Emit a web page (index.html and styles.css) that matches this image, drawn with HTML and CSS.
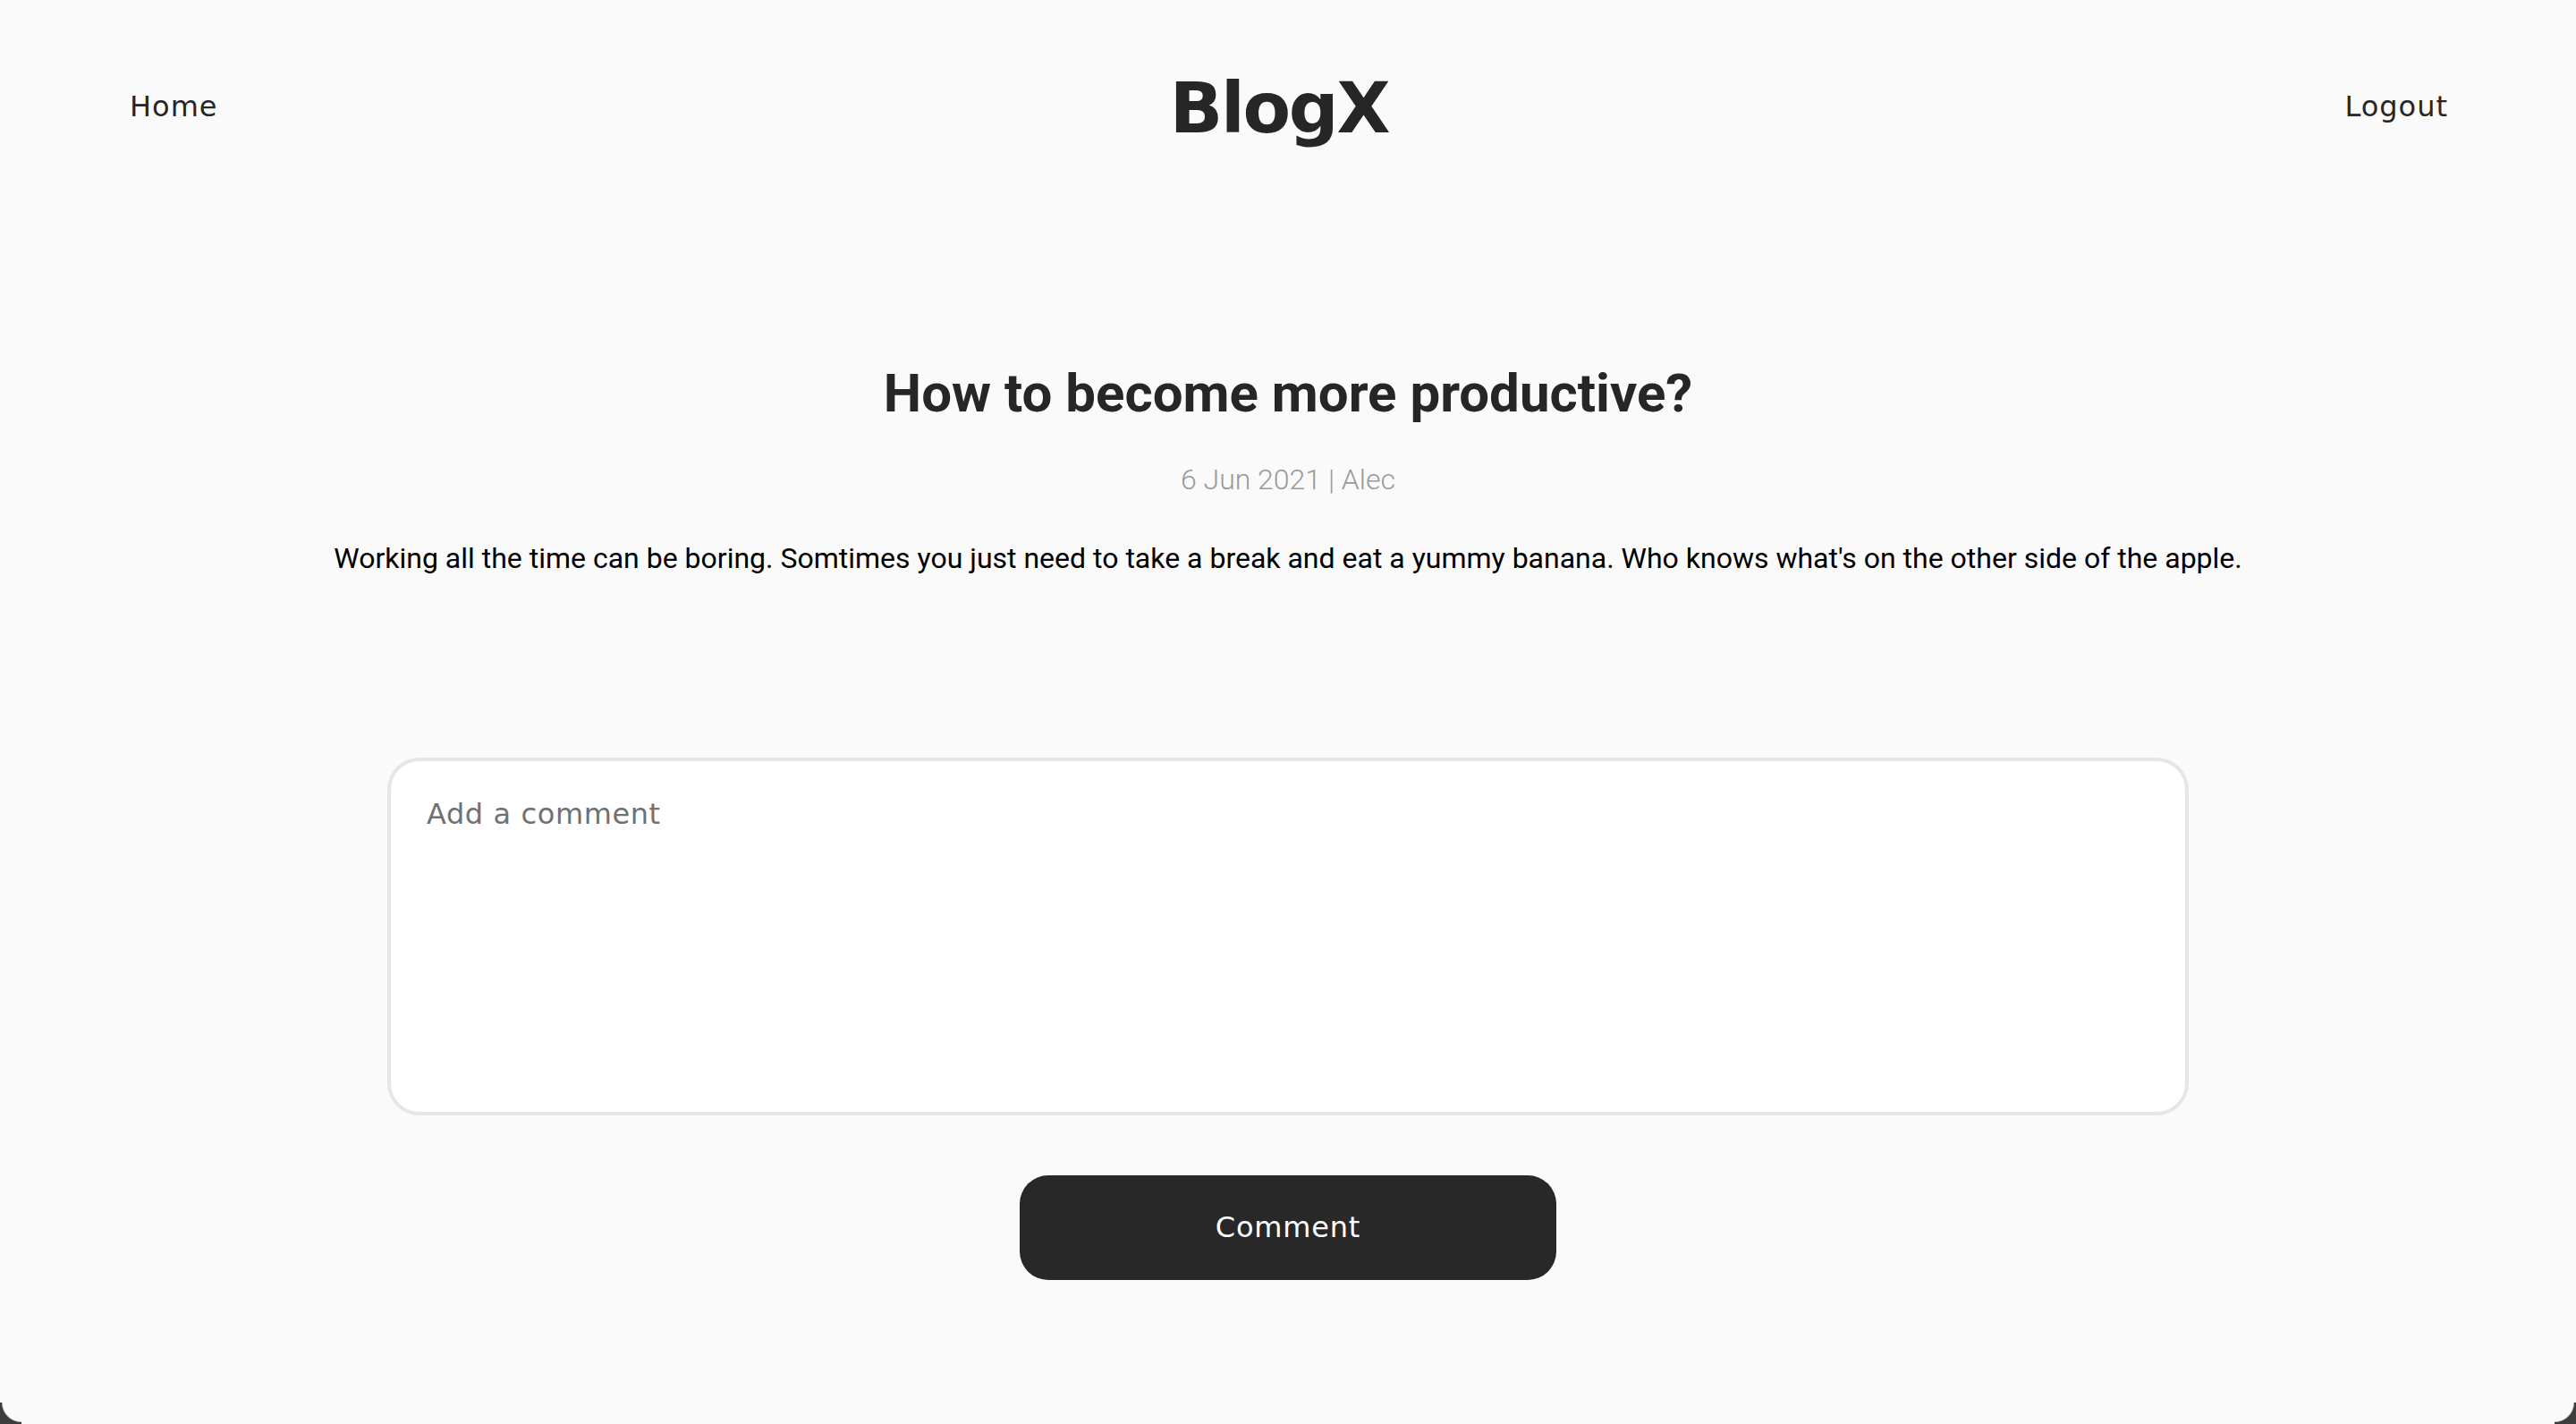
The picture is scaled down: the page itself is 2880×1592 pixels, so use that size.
FILE: index.html
```html
<!DOCTYPE html>
<html lang="en">
<head>
<meta charset="utf-8">
<title>BlogX</title>
<link rel="stylesheet" href="styles.css">
</head>
<body>
<header class="site-header">
  <a class="nav-link nav-left" href="#">Home</a>
  <div class="logo">BlogX</div>
  <a class="nav-link nav-right" href="#">Logout</a>
</header>
<main class="post">
  <h1 class="post-title">How to become more productive?</h1>
  <div class="post-meta">6 Jun 2021 | Alec</div>
  <p class="post-body">Working all the time can be boring. Somtimes you just need to take a break and eat a yummy banana. Who knows what's on the other side of the apple.</p>
  <form class="comment-form">
    <textarea class="comment-input" placeholder="Add a comment"></textarea>
    <button class="comment-button" type="button">Comment</button>
  </form>
</main>
<div class="corner corner-left"></div>
<div class="corner corner-right"></div>
</body>
</html>
```

FILE: styles.css
```css
* { box-sizing: border-box; }

html, body {
  margin: 0;
  padding: 0;
}

body {
  background: #fafafa;
  min-height: 100vh;
  font-family: "DejaVu Sans", "Liberation Sans", sans-serif;
  color: #262626;
}

.site-header {
  display: grid;
  grid-template-columns: 1fr auto 1fr;
  align-items: center;
  height: 238px;
  padding: 0 143px 0 145px;
}

.nav-link {
  font-family: "DejaVu Sans", sans-serif;
  font-size: 32px;
  letter-spacing: 1px;
  color: #262626;
  text-decoration: none;
}

.nav-left { justify-self: start; }
.nav-right { justify-self: end; }

.logo {
  font-family: "DejaVu Sans", sans-serif;
  font-weight: 700;
  font-size: 78px;
  letter-spacing: -2.2px;
  line-height: 1;
  color: #262626;
  margin-top: 4px;
  margin-right: 22px;
}

.post {
  text-align: center;
  padding-top: 166px;
}

.post-title {
  margin: 0;
  font-family: Roboto, "Liberation Sans", sans-serif;
  font-weight: 700;
  font-size: 60px;
  line-height: 1.2;
  color: #262626;
}

.post-meta {
  margin-top: 41px;
  font-family: Roboto, "Liberation Sans", sans-serif;
  font-weight: 300;
  font-size: 32px;
  line-height: 1.2;
  color: #9a9a9a;
}

.post-body {
  margin: 50px 0 0;
  font-family: Roboto, "Liberation Sans", sans-serif;
  font-weight: 400;
  font-size: 32px;
  line-height: 1.2;
  color: #000;
}

.comment-form {
  display: flex;
  flex-direction: column;
  align-items: center;
  margin-top: 203px;
}

.comment-input {
  display: block;
  width: 2014px;
  height: 400px;
  padding: 40px;
  border: 4px solid #e6e6e6;
  border-radius: 36px;
  background: #fff;
  font-family: "DejaVu Sans", sans-serif;
  font-size: 32px;
  letter-spacing: 0.6px;
  color: #262626;
  resize: none;
  outline: none;
}

.comment-input::placeholder {
  color: #717171;
}

.comment-button {
  margin-top: 67px;
  width: 600px;
  height: 117px;
  border: none;
  border-radius: 32px;
  background: #282828;
  color: #fff;
  font-family: "DejaVu Sans", sans-serif;
  font-size: 32px;
  letter-spacing: 0.8px;
  cursor: pointer;
}

.corner {
  position: fixed;
  bottom: 0;
  width: 24px;
  height: 24px;
}

.corner-left {
  left: 0;
  background: radial-gradient(circle at 24px 0, transparent 21px, #3c3c3c 22.5px);
}

.corner-right {
  right: 0;
  background: radial-gradient(circle at 0 0, transparent 21px, #3c3c3c 22.5px);
}
```
